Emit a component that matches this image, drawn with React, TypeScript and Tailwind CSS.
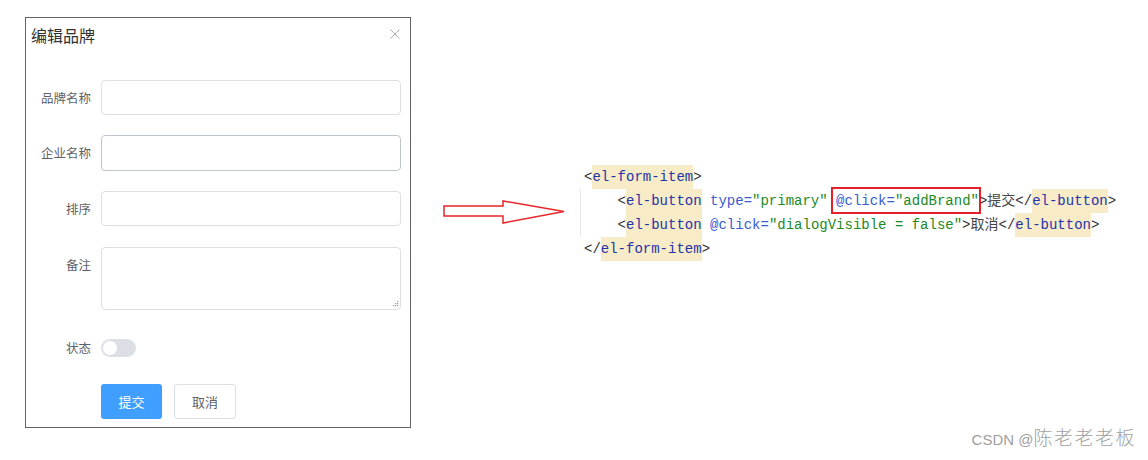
const cjk = { fontFamily: '"Noto Sans CJK SC", "Liberation Sans", sans-serif' };
const mono = { fontFamily: '"Liberation Mono", "Noto Sans CJK SC", monospace' };

const Field = ({ label, children, top }: { label: string; children: React.ReactNode; top: string }) => (
  <div className={`flex items-start ${top}`}>
    <div className="w-[75px] pr-[10px] text-right text-[12.5px] leading-[35px] text-[#606266]">{label}</div>
    {children}
  </div>
);

const Hl = ({ children }: { children: React.ReactNode }) => (
  <span className="inline-block h-[24px] bg-[#f7ebc8] text-[#2434a8]">{children}</span>
);

const Attr = ({ children }: { children: React.ReactNode }) => <span className="text-[#3a5bd0]">{children}</span>;
const Str = ({ children }: { children: React.ReactNode }) => <span className="text-[#22891f]">{children}</span>;

export default function App() {
  return (
    <div className="relative flex h-[460px] w-[1148px] items-start overflow-hidden bg-white" style={cjk}>
      {/* dialog */}
      <div className="ml-[25px] mt-[17px] flex h-[411px] w-[386px] flex-col border border-[#626262] bg-white">
        <div className="flex items-start justify-between">
          <div className="pl-[5px] pt-[6px] text-[16px] leading-[22px] text-[#303133]">编辑品牌</div>
          <svg width="10" height="10" viewBox="0 0 10 10" className="mr-[10px] mt-[11px]">
            <path d="M0.5 0.5 L9.5 9.5 M9.5 0.5 L0.5 9.5" stroke="#a8abb2" strokeWidth="1" fill="none" />
          </svg>
        </div>
        <div className="flex flex-col">
          <Field label="品牌名称" top="mt-[34px]">
            <div className="h-[35px] w-[300px] rounded-[4px] border border-[#dcdfe6]" />
          </Field>
          <Field label="企业名称" top="mt-[20px]">
            <div className="h-[36px] w-[300px] rounded-[4px] border border-[#c0c4cc]" />
          </Field>
          <Field label="排序" top="mt-[20px]">
            <div className="h-[35px] w-[300px] rounded-[4px] border border-[#dcdfe6]" />
          </Field>
          <Field label="备注" top="mt-[21px]">
            <div className="relative h-[63px] w-[300px] rounded-[4px] border border-[#dcdfe6]">
              <svg width="7" height="7" viewBox="0 0 7 7" className="absolute bottom-[1px] right-[1px]">
                <g fill="#9a9a9a">
                  <rect x="5" y="0" width="1.2" height="1.2" />
                  <rect x="3" y="2" width="1.2" height="1.2" />
                  <rect x="5" y="2" width="1.2" height="1.2" />
                  <rect x="1" y="4" width="1.2" height="1.2" />
                  <rect x="3" y="4" width="1.2" height="1.2" />
                  <rect x="5" y="4" width="1.2" height="1.2" />
                </g>
              </svg>
            </div>
          </Field>
          <Field label="状态" top="mt-[20px]">
            <div className="flex h-[35px] items-center">
              <div className="flex h-[18px] w-[35px] items-center rounded-full bg-[#dcdfe6] pl-[2px]">
                <div className="h-[14px] w-[14px] rounded-full bg-white" />
              </div>
            </div>
          </Field>
          <div className="mt-[19px] flex pl-[75px]">
            <div className="flex h-[35px] w-[61px] items-center justify-center rounded-[3px] bg-[#409eff] text-[13px] text-white">提交</div>
            <div className="ml-[12px] flex h-[35px] w-[62px] items-center justify-center rounded-[3px] border border-[#dcdfe6] text-[13px] text-[#606266]">取消</div>
          </div>
        </div>
      </div>

      {/* arrow */}
      <svg width="126" height="28" viewBox="0 0 126 28" className="ml-[32px] mt-[199px]">
        <path d="M1 7 L60 7 L60 2 L121 12.5 L60 24 L60 17 L1 17 Z" fill="none" stroke="#e8262b" strokeWidth="1.5" />
      </svg>

      {/* code */}
      <div className="ml-[15px] mt-[165px] text-[14px] leading-[24px] text-[#333333]" style={mono}>
        <div className="h-[24px] whitespace-pre">
          {'<'}<Hl>el-form-item</Hl>{'>'}
        </div>
        <div className="-ml-[4px] border-l border-[#e6e6e6] pl-[3px]">
          <div className="h-[24px] whitespace-pre">
            {'    <'}<Hl>el-button</Hl> <Attr>type</Attr><Attr>=</Attr><Str>"primary"</Str>{' '}
            <span className="relative">
              <Attr>@click</Attr><Attr>=</Attr><Str>"addBrand"</Str>
              <span className="absolute -left-[5px] -right-[2px] -top-[6px] -bottom-[5px] border-2 border-[#e4202a]" />
            </span>
            {'>'}<span className="text-[#444444]">提交</span>{'</'}<Hl>el-button</Hl>{'>'}
          </div>
          <div className="h-[24px] whitespace-pre">
            {'    <'}<Hl>el-button</Hl> <Attr>@click</Attr><Attr>=</Attr><Str>"dialogVisible = false"</Str>{'>'}<span className="text-[#444444]">取消</span>{'</'}<Hl>el-button</Hl>{'>'}
          </div>
        </div>
        <div className="h-[24px] whitespace-pre">
          {'</'}<Hl>el-form-item</Hl>{'>'}
        </div>
      </div>

      {/* watermark */}
      <div className="absolute bottom-[7px] right-[12px] flex items-baseline text-[15px] text-[#a0a0a0]" style={{ fontFamily: '"Liberation Sans", "Noto Sans CJK SC", sans-serif' }}>
        <span className="whitespace-pre">CSDN @</span><span className="text-[19px] font-light tracking-[1.5px]">陈老老老板</span>
      </div>
    </div>
  );
}
